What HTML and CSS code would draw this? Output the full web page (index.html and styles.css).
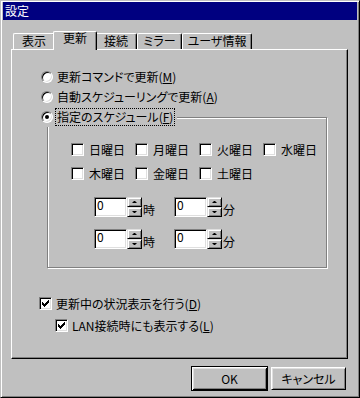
FILE: index.html
```html
<!DOCTYPE html>
<html lang="ja">
<head>
    <meta charset="UTF-8">
    <title>設定</title>
    <link rel="stylesheet" href="styles.css">
</head>
<body>
    <div class="window">
        <div class="titlebar">設定</div>
        <div class="body">
            <div class="tabs">
                <div class="tab">表示</div>
                <div class="tab active">更新</div>
                <div class="tab">接続</div>
                <div class="tab mid">ミラー</div>
                <div class="tab wide">ユーザ情報</div>
            </div>
            <div class="panel">
                <div class="opt"><span class="radio"></span><span class="label">更新コマンドで更新(<u>M</u>)</span></div>
                <div class="opt"><span class="radio"></span><span class="label">自動スケジューリングで更新(<u>A</u>)</span></div>

                <div class="group">
                    <div class="opt group-head"><span class="radio on"></span><span class="label focus">指定のスケジュール(<u>F</u>)</span></div>

                    <div class="days">
                        <div class="day"><span class="check"></span><span class="label">日曜日</span></div>
                        <div class="day"><span class="check"></span><span class="label">月曜日</span></div>
                        <div class="day"><span class="check"></span><span class="label">火曜日</span></div>
                        <div class="day"><span class="check"></span><span class="label">水曜日</span></div>
                        <div class="day"><span class="check"></span><span class="label">木曜日</span></div>
                        <div class="day"><span class="check"></span><span class="label">金曜日</span></div>
                        <div class="day"><span class="check"></span><span class="label">土曜日</span></div>
                    </div>

                    <div class="times">
                        <div class="time-row">
                            <div class="spin"><span class="edit">0</span><span class="spinner"><span class="up"></span><span class="down"></span></span><span class="unit">時</span></div>
                            <div class="spin"><span class="edit">0</span><span class="spinner"><span class="up"></span><span class="down"></span></span><span class="unit">分</span></div>
                        </div>
                        <div class="time-row">
                            <div class="spin"><span class="edit">0</span><span class="spinner"><span class="up"></span><span class="down"></span></span><span class="unit">時</span></div>
                            <div class="spin"><span class="edit">0</span><span class="spinner"><span class="up"></span><span class="down"></span></span><span class="unit">分</span></div>
                        </div>
                    </div>
                </div>

                <div class="check-row first">
                    <span class="check"><svg viewBox="0 0 13 13" width="13" height="13"><path d="M9 3h1v1h-1z M8 4h2v1h-2z M3 5h1v1h-1z M7 5h3v1h-3z M3 6h2v1h-2z M6 6h3v1h-3z M3 7h5v1h-5z M4 8h3v1h-3z M5 9h1v1h-1z"/></svg></span>
                    <span class="label">更新中の状況表示を行う(<u>D</u>)</span>
                </div>
                <div class="check-row sub">
                    <span class="check"><svg viewBox="0 0 13 13" width="13" height="13"><path d="M9 3h1v1h-1z M8 4h2v1h-2z M3 5h1v1h-1z M7 5h3v1h-3z M3 6h2v1h-2z M6 6h3v1h-3z M3 7h5v1h-5z M4 8h3v1h-3z M5 9h1v1h-1z"/></svg></span>
                    <span class="label">LAN接続時にも表示する(<u>L</u>)</span>
                </div>
            </div>

            <div class="buttons">
                <button class="btn default">OK</button>
                <button class="btn">キャンセル</button>
            </div>
        </div>
    </div>
</body>
</html>
```

FILE: styles.css
```css
body {
    margin: 0;
    font-family: "Noto Sans CJK JP", "Noto Sans", sans-serif;
    font-size: 12px;
    font-feature-settings: "palt";
    color: #000;
    background: #c0c0c0;
}
u {
    text-decoration-thickness: 1px;
    text-underline-offset: 1px;
}
.window {
    width: 360px;
    height: 398px;
    box-sizing: border-box;
    background: #c0c0c0;
    border: 1px solid;
    border-color: #c0c0c0 #000 #000 #c0c0c0;
    box-shadow: inset 1px 1px #fff, inset -1px -1px #808080;
    padding: 1px 2px;
}
.titlebar {
    height: 18px;
    line-height: 18px;
    padding-left: 2px;
    background: #000080;
    color: #fff;
}
.body {
    padding: 11px 9px 0 8px;
}

/* タブ */
.tabs {
    display: flex;
    align-items: flex-end;
    height: 18px;
    padding-left: 2px;
}
.tab {
    width: 42px;
    height: 16px;
    box-sizing: border-box;
    border: 1px solid;
    border-bottom: 0;
    border-color: #fff #000 #000 #fff;
    border-radius: 2px 2px 0 0;
    box-shadow: inset -1px 0 #808080;
    background: #c0c0c0;
    text-align: center;
    line-height: 13px;
}
.tab.mid {
    width: 45px;
}
.tab.wide {
    width: 70px;
}
.tab.active {
    position: relative;
    z-index: 1;
    width: 44px;
    height: 19px;
    margin: 0 -2px -1px;
    line-height: 12px;
}
.panel {
    height: 310px;
    box-sizing: border-box;
    border: 1px solid;
    border-color: #fff #000 #000 #fff;
    box-shadow: inset -1px -1px #808080;
    padding: 17px 0 0 29px;
}

/* ラジオ・チェック */
.opt {
    display: flex;
    align-items: center;
    height: 20px;
}
.opt .label {
    margin-left: 3px;
    padding: 0 1px;
    line-height: 14px;
}
.focus {
    padding: 1px 1px !important;
    outline: 1px dotted #000;
}
.radio {
    position: relative;
    width: 12px;
    height: 12px;
    box-sizing: border-box;
    border: 1px solid;
    border-color: #808080 #fff #fff #808080;
    border-radius: 50%;
    box-shadow: inset 1px 1px #000, inset -1px -1px #dfdfdf;
    background: #fff;
}
.radio.on::after {
    content: "";
    position: absolute;
    left: 3px;
    top: 3px;
    width: 4px;
    height: 4px;
    border-radius: 50%;
    background: #000;
}
.check {
    display: inline-block;
    flex: none;
    width: 13px;
    height: 13px;
    box-sizing: border-box;
    border: 1px solid;
    border-color: #808080 #fff #fff #808080;
    box-shadow: inset 1px 1px #000, inset -1px -1px #dfdfdf;
    background: #fff;
}
.check svg {
    display: block;
    margin: -1px;
    shape-rendering: crispEdges;
}

/* グループ枠 */
.group {
    width: 280px;
    box-sizing: border-box;
    margin: 10px 0 0 6px;
    border: 1px solid #808080;
    box-shadow: 1px 1px #fff, inset 1px 1px #fff;
    padding-bottom: 18px;
}
.group-head {
    width: fit-content;
    margin: -11px 0 0 -7px;
    padding-right: 3px;
    background: #c0c0c0;
}
.days {
    display: grid;
    grid-template-columns: repeat(4, 64px);
    row-gap: 5px;
    margin: 13px 0 0 23px;
}
.day {
    display: flex;
    align-items: center;
    height: 19px;
}
.day .label {
    margin-left: 5px;
}

/* 時刻 */
.times {
    display: flex;
    flex-direction: column;
    gap: 12px;
    margin: 14px 0 0 46px;
}
.time-row {
    display: flex;
}
.spin {
    display: flex;
    width: 80px;
}
.edit {
    width: 33px;
    height: 20px;
    box-sizing: border-box;
    border: 1px solid;
    border-color: #808080 #fff #fff #808080;
    box-shadow: inset 1px 1px #000, inset -1px -1px #dfdfdf;
    background: #fff;
    padding-left: 2px;
    line-height: 14px;
}
.spinner {
    display: flex;
    flex-direction: column;
    width: 15px;
    height: 20px;
}
.spinner span {
    display: flex;
    align-items: center;
    justify-content: center;
    height: 10px;
    box-sizing: border-box;
    border: 1px solid;
    border-color: #dfdfdf #000 #000 #dfdfdf;
    box-shadow: inset 1px 1px #fff, inset -1px -1px #808080;
    background: #c0c0c0;
}
.spinner .up::after,
.spinner .down::after {
    content: "";
    width: 1px;
    border-left: 2px solid transparent;
    border-right: 2px solid transparent;
}
.spinner .up::after {
    border-bottom: 2px solid #000;
}
.spinner .down::after {
    border-top: 2px solid #000;
}
.unit {
    align-self: flex-end;
    line-height: 14px;
    margin-left: 1px;
}

/* 下部チェック */
.check-row {
    display: flex;
    align-items: center;
    height: 20px;
    margin-left: -2px;
}
.check-row.first {
    margin-top: 25px;
}
.check-row.sub {
    margin-left: 14px;
    margin-top: 2px;
}
.check-row .label {
    margin-left: 4px;
}

/* ボタン */
.buttons {
    display: flex;
    justify-content: flex-end;
    align-items: center;
    gap: 3px;
    height: 25px;
    margin-top: 7px;
    padding-right: 2px;
}
.btn {
    width: 75px;
    height: 23px;
    box-sizing: border-box;
    padding: 0;
    border: 1px solid;
    border-color: #fff #000 #000 #fff;
    box-shadow: inset 1px 1px #dfdfdf, inset -1px -1px #808080;
    background: #c0c0c0;
    font: inherit;
    color: #000;
    line-height: 21px;
}
.btn.default {
    width: 77px;
    height: 25px;
    border-color: #000;
    box-shadow: inset 1px 1px #fff, inset -1px -1px #000, inset 2px 2px #dfdfdf, inset -2px -2px #808080;
}
```
